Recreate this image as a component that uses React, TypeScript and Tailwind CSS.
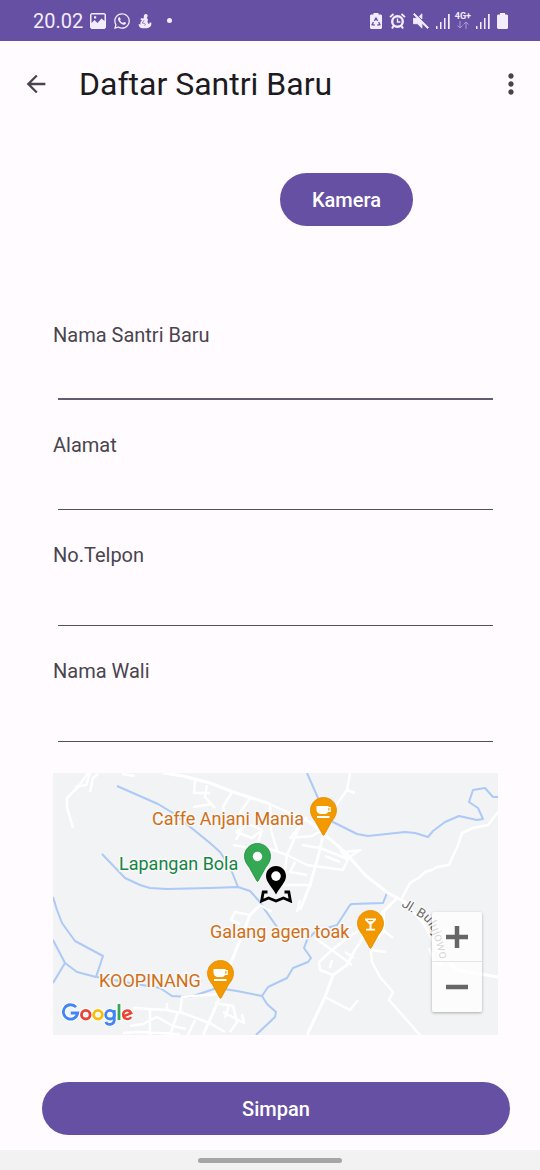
import type { ReactNode } from "react";
import { MdArrowBack, MdMoreVert } from "react-icons/md";
import { FaWhatsapp } from "react-icons/fa";

const rivers = [
  "M117 786 L158 804 L173 813 L210 843 L220 852 L230 867 L238 887",
  "M102 854 L125 878 L140 885 L150 888 L167 889 L210 888 L238 887 L250 891 L260 902 L265 910 L277 927",
  "M387 893 L383 903 L352 904 L350 905 L337 925 L315 932 L307 940 L304 948 L311 958 L308 962 L293 968 L287 978 L268 987 L262 996 L267 1004 L276 1012 L275 1017 L256 1035",
  "M97 977 L130 983 L160 988 L172 996 L190 997 L217 988 L237 991 L262 996",
  "M53 897 L57 910 L62 923 L75 941 L103 956 L96 977 L77 972 L65 963 L53 940",
  "M65 963 L53 983",
  "M307 773 L318 798 L333 822 L357 834 L368 836 L405 832 L415 833 L428 837 L433 831 L445 822 L459 816 L477 820 L483 819 L478 808 L469 802 L473 790 L485 788 L493 797 L498 797",
];

const mainRoads = [
  "M163 773 L183 776 L210 783 L233 792 L267 803 L310 822 L317 828 L345 852 L365 875 L388 893 L405 902 L425 925 L440 955 L458 970 L498 977",
  "M397 898 L380 915 L368 930 L355 950 L347 965 L333 975 L325 997 L307 1035",
  "M325 828 L318 857 L310 885 L300 910",
  "M260 905 L250 915 L243 933 L230 965 L220 997 L213 1013 L203 1035",
];

const lanes = [
  "M88 773 L78 787 L67 798 L67 807 L73 828",
  "M75 787 L86 785 L90 773 M90 792 L93 778 L98 774 M122 774 L135 776",
  "M195 780 L194 793 L210 793 M193 807 L212 804",
  "M207 785 L205 797 L215 808 M232 792 L223 807 L225 814 M250 798 L240 813 L242 828 L236 840 M270 805 L271 830 L277 850",
  "M233 845 L250 848 L267 848 L287 855 L307 865 L343 870 L348 859 L320 848",
  "M236 832 L252 838 L262 830 L248 824 L236 832 M262 830 L256 848 M307 817 L290 838 L312 836 L322 830 M300 826 L287 855",
  "M350 773 L347 790 L355 793 M347 790 L333 810 L325 828",
  "M302 845 L320 848 M325 856 L340 862 M295 862 L290 872 L307 875 M283 885 L312 885 M287 855 L283 885",
  "M340 850 L348 859 M345 860 L360 850 L345 852",
  "M498 812 L488 825 L473 828 L462 833 L458 845 L449 865 L437 867 L432 870 L425 872 L420 877 L410 883 L402 898",
  "M325 997 L350 1010 L358 1000",
  "M333 975 L320 970 L319 962 L332 950 L352 965 M332 950 L350 936 L360 930 M315 938 L332 950 M332 960 L330 968",
  "M370 945 L372 962 L380 977 L393 992 L389 1000 L420 1035 M370 950 L386 952 M383 930 L393 938 M345 952 L354 958 M384 912 L383 932 L377 938",
  "M260 905 L272 912 M250 915 L235 912 L231 920 L240 924 M300 900 L297 912",
  "M219 994 L182 997 L180 1012 L212 1024 M133 1008 L167 1010 L180 1013 M167 1003 L167 1010 M150 1008 L150 1035 M130 1026 L143 1024 L157 1017 L173 1026 L186 1029 M123 1033 L140 1032 L180 1034 M178 1012 L170 1035",
  "M215 1003 L233 1006 L237 1022 L230 1032 M208 1022 L225 1032 M223 1012 L244 1023 L242 1014 M195 1020 L188 1035 M229 1005 L225 1018",
  "M429 948 L434 962 L441 965 M440 950 L442 966",
];

function CupGlyph() {
  return (
    <g fill="#fff">
      <path d="M6.500 9h12v1h2.300v5h-2.800c-.6 1.300-1.500 2-3 2h-4c-2.600 0-4.500-1.700-4.500-4.500zM18.200 11.300v2.300h1.300v-2.300z" fillRule="evenodd" />
      <path d="M7 19h12.500v2H7z" />
    </g>
  );
}

function CocktailGlyph() {
  return <path d="M8 8.500h11v1.500l-4.500 4.500v4.300h3.500v1.700H9v-1.700h3.500v-4.300L8 10zM10.500 10l1.200 1.300h3.600l1.200-1.300z" fill="#fff" fillRule="evenodd" />;
}

function MapPin({ color, edge, className, children }: { color: string; edge: string; className: string; children: ReactNode }) {
  return (
    <svg viewBox="0 0 27 39" className={`absolute h-[39px] w-[27px] ${className}`} aria-hidden="true">
      <path d="M13.500 .5C6.200 .5 .5 6.200 .5 13.300c0 4.700 2.400 7.900 4.900 11.200L12.900 38q.6 .9 1.200 0l7.500-13.500c2.500-3.300 4.900-6.500 4.900-11.200C26.500 6.200 20.800 .5 13.500 .5z" fill={color} stroke={edge} strokeWidth=".8" />
      {children}
    </svg>
  );
}

function MarkerIcon() {
  return (
    <svg viewBox="0 0 34 38" className="absolute top-[92px] left-[206px] h-[38px] w-[34px]" aria-hidden="true">
      <path d="M8.500 27H4.200L2.600 36l7-3 7.400 3 7.400-3 7 3-1.600-9h-4.300" fill="none" stroke="#000" strokeWidth="2.800" />
      <path d="M17 1C11.300 1 7 5.400 7 11c0 6.200 6 11 10 18.500C21 22 27 17.200 27 11 27 5.400 22.700 1 17 1z" fill="#000" />
      <circle cx="17" cy="11.100" r="4.800" fill="#fff" />
    </svg>
  );
}

function PictureIcon() {
  return (
    <svg viewBox="0 0 16 16" className="size-4" aria-hidden="true">
      <path d="M1.500 0h13L16 1.500v13L14.500 16h-13L0 14.500v-13zM1.500 1.500V10l3-3 3 3 4-4.500 3 2.500V1.500zM4 3.200h2.200v2.200H4z" fill="currentColor" fillRule="evenodd" />
    </svg>
  );
}

function FigureIcon() {
  return (
    <svg viewBox="0 0 15 17" className="h-4 w-3.5" fill="currentColor" aria-hidden="true">
      <path d="M7.500 1.200C9.300.6 10.500 1.800 10.300 3.300 10.200 4.200 9.500 4.800 9.400 5.400c1.500 1.100 1.400 2.700.7 3.900l.9 2.200c1 .3 1.700-.3 1.500-1.600l1.800.6c.4 3-1.300 5.600-4.800 5.700H5.200C1.900 16.200.7 14.300.7 11.600l2 .7c-.5-2 .2-3.700 1.700-4.700L2.500 6.800l.7-1.200 2.600.1c.3-.6.6-.9.5-1.600C6.100 3 6.300 1.700 7.500 1.200z" />
      <path d="m6.700 7.500-2.200 3.200 3 .4M8.300 11.500l-1.300 2" fill="none" stroke="#6650a4" strokeWidth=".7" />
    </svg>
  );
}

function BatterySaver() {
  return (
    <svg viewBox="0 0 12 16" className="h-4 w-3" aria-hidden="true">
      <path d="M3.500 0h5v1.500H11l1 1V15l-1 1H1l-1-1V2.500l1-1h2.500z" fill="currentColor" />
      <path d="M4.400 7.800 6 5.100l1.600 2.700M8.700 9l1.200 2.700-2.700.4M4.900 12.100l-2.800-.4 1.300-2.700" fill="none" stroke="#6650a4" strokeWidth="1.300" />
    </svg>
  );
}

function AlarmIcon() {
  return (
    <svg viewBox="0 0 17 16" className="h-4 w-[17px]" fill="none" stroke="currentColor" aria-hidden="true">
      <circle cx="8.500" cy="8.500" r="5.300" strokeWidth="2.400" />
      <path d="M8.500 5.500V9h2.800" strokeWidth="1.400" />
      <path d="M1 4.200 4.500 1M16 4.200 12.500 1" strokeWidth="1.800" />
      <path d="m4.500 13-1.500 2.500M12.500 13l1.500 2.500" strokeWidth="2" />
    </svg>
  );
}

function MuteIcon() {
  return (
    <svg viewBox="3 3 18 18" className="size-4" fill="currentColor" stroke="currentColor" strokeWidth="1" aria-hidden="true">
      <path d="M4.500 3.500 3.500 4.500 8 9H3.500v6H8l5 5v-5.700l6.200 6.200 1.300-1.300zM13 4l-3 2.800 3 3z" />
    </svg>
  );
}

function SignalBars() {
  return (
    <svg viewBox="0 0 14 16" className="h-4 w-3.5" fill="currentColor" aria-hidden="true">
      <path d="M0 13h1.500v3H0zM4 9h1.500v7H4zM8 5h1.500v11H8zM12 1h1.700v15H12z" />
    </svg>
  );
}

function BatteryIcon() {
  return (
    <svg viewBox="0 0 11 16" className="h-4 w-[11px]" fill="currentColor" aria-hidden="true">
      <path d="M3 0h5v1.500h2l1 1V15l-1 1H1l-1-1V2.500l1-1h2z" />
    </svg>
  );
}

function GoogleLogo() {
  return (
    <svg viewBox="0 0 72 25" className="absolute top-[229px] left-2 h-[25px] w-[72px]" fill="none" strokeWidth="2.800" role="img" aria-label="Google">
      <g stroke="#fff" strokeWidth="5" strokeLinejoin="round">
        <path d="M15 5.200A7.200 7.200 0 1 0 16.700 11H9.800" />
        <circle cx="24.800" cy="12.700" r="4.300" />
        <circle cx="37" cy="12.700" r="4.300" />
        <path d="M53 8v9.500c0 6-7 6-8.200 2.500M58 2v16" />
        <circle cx="49" cy="12.700" r="4.300" />
        <path d="m62.500 14.300 7.700-3.200c-2.100-4.600-8.500-2.700-8 2 .4 4.300 6 5.100 8 2" />
      </g>
      <path d="M15 5.200A7.200 7.200 0 1 0 16.700 11H9.800" stroke="#4285f4" />
      <circle cx="24.800" cy="12.700" r="4.300" stroke="#ea4335" />
      <circle cx="37" cy="12.700" r="4.300" stroke="#fbbc05" />
      <circle cx="49" cy="12.700" r="4.300" stroke="#4285f4" />
      <path d="M53.300 8v9.500c0 6-7 6-8.500 2.500" stroke="#4285f4" />
      <path d="M58 2v16" stroke="#34a853" />
      <path d="m62.500 14.300 7.700-3.200c-2.100-4.600-8.500-2.700-8 2 .4 4.300 6 5.100 8 2" stroke="#ea4335" strokeWidth="2.500" />
    </svg>
  );
}

function PlaceName({ className, children }: { className: string; children: string }) {
  return (
    <span className={`absolute whitespace-nowrap [paint-order:stroke] [-webkit-text-stroke:3px_#f8f9fa] ${className}`}>{children}</span>
  );
}

function MapView() {
  return (
    <section aria-label="Peta lokasi" className="relative h-[262px] overflow-hidden bg-[#f1f3f4] text-lg leading-6">
      <svg viewBox="53 773 445 262" preserveAspectRatio="xMinYMin slice" className="h-full w-full" fill="none" strokeLinejoin="round" aria-hidden="true">
        {rivers.map((d) => (
          <path key={d} d={d} stroke="#adc9f6" strokeWidth="2" />
        ))}
        {lanes.map((d) => (
          <path key={d} d={d} stroke="#fff" strokeWidth="2.500" />
        ))}
        {mainRoads.map((d) => (
          <path key={d} d={d} stroke="#fff" strokeWidth="3" />
        ))}
        <path id="street" d="M401 906 L424 920 Q434 928 440 960" />
        <text fontSize="13" fill="#666" stroke="#fff" strokeWidth="2" paintOrder="stroke">
          <textPath href="#street">Jl. Bulujowo</textPath>
        </text>
      </svg>
      <PlaceName className="top-[34px] left-[99px] text-[#d16f16]">Caffe Anjani Mania</PlaceName>
      <PlaceName className="top-[79px] left-[66px] text-[#188544]">Lapangan Bola</PlaceName>
      <PlaceName className="top-[147px] left-[157px] text-[#d16f16]">Galang agen toak</PlaceName>
      <PlaceName className="top-[196px] left-[46px] text-[#d16f16]">KOOPINANG</PlaceName>
      <MapPin color="#f29900" edge="#e38a00" className="top-[24px] left-[257px]"><CupGlyph /></MapPin>
      <MapPin color="#34a853" edge="#1e8e3e" className="top-[70px] left-[191px]"><circle cx="13.500" cy="13.500" r="4.700" fill="#fff" /></MapPin>
      <MapPin color="#f29900" edge="#e38a00" className="top-[137px] left-[304px]"><CocktailGlyph /></MapPin>
      <MapPin color="#f29900" edge="#e38a00" className="top-[187px] left-[154px]"><CupGlyph /></MapPin>
      <MarkerIcon />
      <GoogleLogo />
      <div className="absolute right-4 bottom-[23px] flex w-[50px] flex-col divide-y divide-[#e4e4e4] rounded-xs bg-white/75 shadow-[0_1px_3px_rgba(0,0,0,0.3)]">
        <button type="button" aria-label="Perbesar" className="flex h-[50px] items-center justify-center">
          <svg viewBox="0 0 24 24" className="size-6" stroke="#666" strokeWidth="4.500" aria-hidden="true"><path d="M1 12h22M12 1v22" /></svg>
        </button>
        <button type="button" aria-label="Perkecil" className="flex h-[50px] items-center justify-center">
          <svg viewBox="0 0 24 24" className="size-6" stroke="#666" strokeWidth="4.500" aria-hidden="true"><path d="M1 12h22" /></svg>
        </button>
      </div>
    </section>
  );
}

function Field({ id, label, type = "text", focused = false, roomy = false }: { id: string; label: string; type?: string; focused?: boolean; roomy?: boolean }) {
  return (
    <div className={roomy ? "h-[116px]" : "h-[110px]"}>
      <label htmlFor={id} className="block text-xl leading-7 text-[#49454f]">{label}</label>
      <div className="px-[5px]">
        <input
          id={id}
          type={type}
          className={`block w-full bg-transparent text-xl text-[#1c1b1f] outline-none ${roomy ? "h-[57px]" : "h-[51px]"} ${focused ? "border-b-2 border-[#625b71]" : "border-b border-[#56525c]"}`}
        />
      </div>
    </div>
  );
}

export default function App() {
  return (
    <div className="flex min-h-screen flex-col bg-[#fffbfe] font-[Roboto,sans-serif] text-[#1c1b1f]">
      <div className="flex h-[41px] items-center justify-between bg-[#6650a4] pr-8 pl-[33px] text-[#f3ecff]">
        <div className="flex items-center gap-[7px]">
          <span className="text-xl leading-6">20.02</span>
          <PictureIcon />
          <FaWhatsapp className="size-[18px]" />
          <FigureIcon />
          <span className="ml-2 size-[5px] rounded-full bg-current" />
        </div>
        <div className="flex items-center gap-[7px]">
          <BatterySaver />
          <AlarmIcon />
          <MuteIcon />
          <SignalBars />
          <span className="-mx-0.5 flex flex-col items-center text-[9px] leading-[9px] font-bold">
            4G+
            <svg viewBox="0 0 12 8" className="h-2 w-3 opacity-50" fill="none" stroke="currentColor" aria-hidden="true">
              <path d="M3 0v7M.5 4.500 3 7l2.500-2.500M9 8V1M6.500 3.500 9 1l2.500 2.500" />
            </svg>
          </span>
          <SignalBars />
          <BatteryIcon />
        </div>
      </div>

      <header className="flex h-[86px] items-center pr-[13px] pl-[22px]">
        <button type="button" aria-label="Kembali"><MdArrowBack className="size-7 text-[#49454f]" /></button>
        <h1 className="ml-[29px] flex-1 text-[32px] leading-10">Daftar Santri Baru</h1>
        <button type="button" aria-label="Menu lainnya"><MdMoreVert className="size-8 text-[#49454f]" /></button>
      </header>

      <form className="flex flex-1 flex-col" onSubmit={(e) => e.preventDefault()}>
        <div className="mt-[46px] flex justify-end pr-[127px]">
          <button type="button" className="h-[53px] rounded-full bg-[#6650a4] px-8 text-xl font-medium text-white">Kamera</button>
        </div>
        <div className="mt-[95px] pr-[42px] pl-[53px]">
          <Field id="nama-santri" label="Nama Santri Baru" focused />
          <Field id="alamat" label="Alamat" />
          <Field id="telpon" label="No.Telpon" type="tel" roomy />
          <Field id="nama-wali" label="Nama Wali" roomy />
          <MapView />
        </div>
        <div className="mt-auto pr-[30px] pb-[15px] pl-[42px]">
          <button type="submit" className="h-[53px] w-full rounded-full bg-[#6650a4] text-xl font-medium text-white">Simpan</button>
        </div>
      </form>

      <div className="flex h-5 items-center justify-center bg-[#f2f2f2]">
        <span className="h-[5px] w-36 rounded-full bg-[#a6a6a6]" />
      </div>
    </div>
  );
}
